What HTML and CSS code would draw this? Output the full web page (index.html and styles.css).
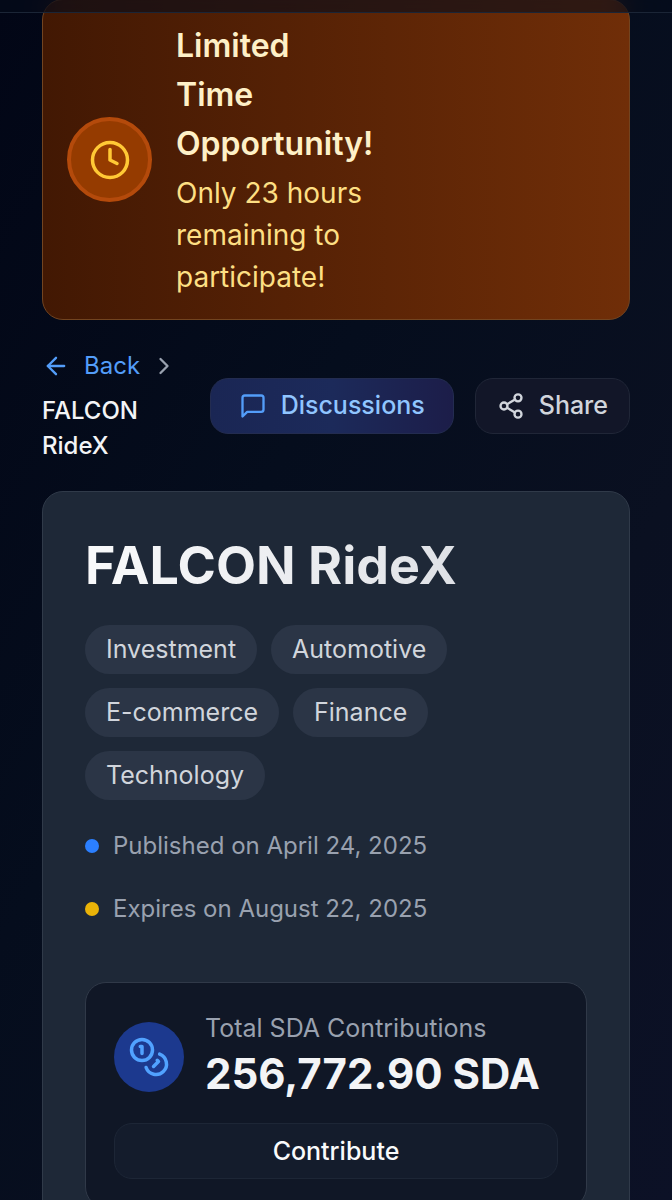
FILE: index.html
```html
<!DOCTYPE html>
<html lang="en">
<head>
  <meta charset="UTF-8">
  <meta name="viewport" content="width=device-width, initial-scale=1">
  <title>FALCON RideX</title>
  <link rel="stylesheet" href="styles.css">
</head>
<body>

  <header class="topbar"></header>

  <main class="page">
    <section class="banner">
      <div class="banner-icon">
        <svg class="icon-lg" viewBox="0 0 24 24"><circle cx="12" cy="12" r="10"/><path d="M12 6v6l4 2"/></svg>
      </div>
      <div class="banner-text">
        <h2>Limited Time Opportunity!</h2>
        <p>Only 23 hours remaining to participate!</p>
      </div>
    </section>

    <div class="toolbar">
      <nav class="breadcrumb">
        <a href="#" class="back">
          <svg class="icon" viewBox="0 0 24 24"><path d="m12 19-7-7 7-7"/><path d="M19 12H5"/></svg>
          Back
        </a>
        <svg class="icon chevron" viewBox="0 0 24 24"><path d="m9 18 6-6-6-6"/></svg>
        <span class="current">FALCON RideX</span>
      </nav>
      <div class="actions">
        <button class="btn btn-discuss">
          <svg class="icon" viewBox="0 0 24 24"><path d="M21 15a2 2 0 0 1-2 2H7l-4 4V5a2 2 0 0 1 2-2h14a2 2 0 0 1 2 2z"/></svg>
          Discussions
        </button>
        <button class="btn btn-share">
          <svg class="icon" viewBox="0 0 24 24"><circle cx="18" cy="5" r="3"/><circle cx="6" cy="12" r="3"/><circle cx="18" cy="19" r="3"/><path d="m8.6 13.5 6.8 4"/><path d="m15.4 6.5-6.8 4"/></svg>
          Share
        </button>
      </div>
    </div>

    <article class="card">
      <h1>FALCON RideX</h1>
      <ul class="tags">
        <li>Investment</li>
        <li>Automotive</li>
        <li>E-commerce</li>
        <li>Finance</li>
        <li>Technology</li>
      </ul>
      <div class="dates">
        <p><span class="dot blue"></span>Published on April 24, 2025</p>
        <p><span class="dot yellow"></span>Expires on August 22, 2025</p>
      </div>

      <section class="total">
        <div class="total-row">
          <div class="total-icon">
            <svg class="icon-lg" viewBox="0 0 24 24"><circle cx="8" cy="8" r="6"/><path d="M18.09 10.37A6 6 0 1 1 10.34 18"/><path d="M7 6h1v4"/><path d="m16.71 13.88.7.71-2.82 2.82"/></svg>
          </div>
          <div>
            <p class="total-label">Total SDA Contributions</p>
            <p class="total-amount">256,772.90 SDA</p>
          </div>
        </div>
        <button class="contribute">Contribute</button>
      </section>
    </article>
  </main>

</body>
</html>
```
FILE: styles.css
```css
* {
  box-sizing: border-box;
}

body {
  margin: 0;
  font-family: Inter, sans-serif;
  font-size: 25px;
  line-height: 35px;
  color: #f3f4f6;
  background: linear-gradient(120deg, #020616 0%, #050d1d 40%, #0a1021 70%, #0c1126 100%);
}

h1, h2, p, ul {
  margin: 0;
  padding: 0;
}

button {
  font: inherit;
  font-weight: 500;
  cursor: pointer;
}

svg {
  flex-shrink: 0;
  fill: none;
  stroke: currentColor;
  stroke-width: 2;
  stroke-linecap: round;
  stroke-linejoin: round;
}

.icon {
  width: 28px;
  height: 28px;
}

.icon-lg {
  width: 42px;
  height: 42px;
}

/* bottom edge of the sticky header, page scrolled under it */
.topbar {
  position: fixed;
  top: 0;
  left: 0;
  right: 0;
  height: 13px;
  background: rgba(5, 11, 26, 0.6);
  backdrop-filter: blur(12px);
  border-bottom: 1px solid #1b2536;
}

.page {
  display: flex;
  flex-direction: column;
  gap: 28px;
  height: 100vh;
  padding: 0 42px;
  overflow: hidden;
}

.banner {
  display: flex;
  flex-shrink: 0;
  align-items: center;
  gap: 24px;
  margin-top: -1px;
  padding: 21px 24px;
  background: linear-gradient(90deg, #421803, #702e08);
  border: 1px solid #724420;
  border-radius: 21px;
}

.banner-icon {
  display: flex;
  align-items: center;
  justify-content: center;
  width: 85px;
  height: 85px;
  color: #ffc935;
  background: #953b00;
  border: 4px solid #b44a0b;
  border-radius: 50%;
}

.banner-text {
  width: min-content;
}

.banner-text h2 {
  margin-bottom: 4px;
  font-size: 32px;
  line-height: 49px;
  font-weight: 600;
  color: #fef0c7;
}

.banner-text p {
  font-size: 28px;
  line-height: 42px;
  color: #fddf83;
}

.toolbar {
  display: flex;
  flex-shrink: 0;
  align-items: center;
  justify-content: space-between;
  gap: 21px;
}

.breadcrumb {
  display: flex;
  flex: 1;
  flex-wrap: wrap;
  align-items: center;
  gap: 10px;
  font-size: 24px;
}

.back {
  display: flex;
  align-items: center;
  gap: 14px;
  color: #539df9;
  text-decoration: none;
}

.chevron {
  color: #99a1af;
}

.current {
  font-weight: 500;
}

.actions {
  display: flex;
  gap: 21px;
}

.btn {
  display: flex;
  align-items: center;
  gap: 14px;
  height: 56px;
  border: 1px solid #202637;
  border-radius: 18px;
}

.btn-discuss {
  padding: 0 28px;
  color: #90c5ff;
  background: linear-gradient(90deg, #1a2654, #1c2a5a 50%, #1c1d49);
  border-color: #232c50;
}

.btn-discuss .icon {
  color: #539df9;
}

.btn-share {
  padding: 0 21px;
  color: #d1d5dc;
  background: #121628;
}

.card {
  flex-shrink: 0;
  padding: 42px;
  background: #1e2837;
  border: 1px solid #303a49;
  border-radius: 21px;
}

h1 {
  width: 100%;
  margin-bottom: 28px;
  font-size: 52px;
  line-height: 63px;
  font-weight: 700;
  color: transparent;
  background: linear-gradient(90deg, #f9fafb 0%, #e5e7eb 60%, #d1d5dc 100%);
  background-clip: text;
}

.tags {
  display: flex;
  flex-wrap: wrap;
  gap: 14px;
  margin-bottom: 28px;
  list-style: none;
}

.tags li {
  padding: 7px 21px;
  color: #d1d5dc;
  background: #2b3546;
  border-radius: 25px;
}

.dates {
  display: flex;
  flex-direction: column;
  gap: 28px;
  margin-bottom: 56px;
  font-size: 24px;
  color: #99a1af;
}

.dates p {
  display: flex;
  align-items: center;
  gap: 14px;
}

.dot {
  width: 14px;
  height: 14px;
  border-radius: 50%;
}

.blue {
  background: #2b7fff;
}

.yellow {
  background: #eab308;
}

.total {
  padding: 28px;
  background: #101726;
  border: 1px solid #303948;
  border-radius: 21px;
}

.total-row {
  display: flex;
  align-items: center;
  gap: 21px;
  margin-bottom: 21px;
}

.total-icon {
  display: flex;
  align-items: center;
  justify-content: center;
  width: 70px;
  height: 70px;
  color: #51a2ff;
  background: #1c398e;
  border-radius: 50%;
}

.total-label {
  color: #99a1af;
}

.total-amount {
  font-size: 42px;
  line-height: 56px;
  font-weight: 700;
}

.contribute {
  width: 100%;
  height: 56px;
  color: #f9fafb;
  background: #141c2c;
  border: 1px solid #1d2636;
  border-radius: 18px;
}
```
